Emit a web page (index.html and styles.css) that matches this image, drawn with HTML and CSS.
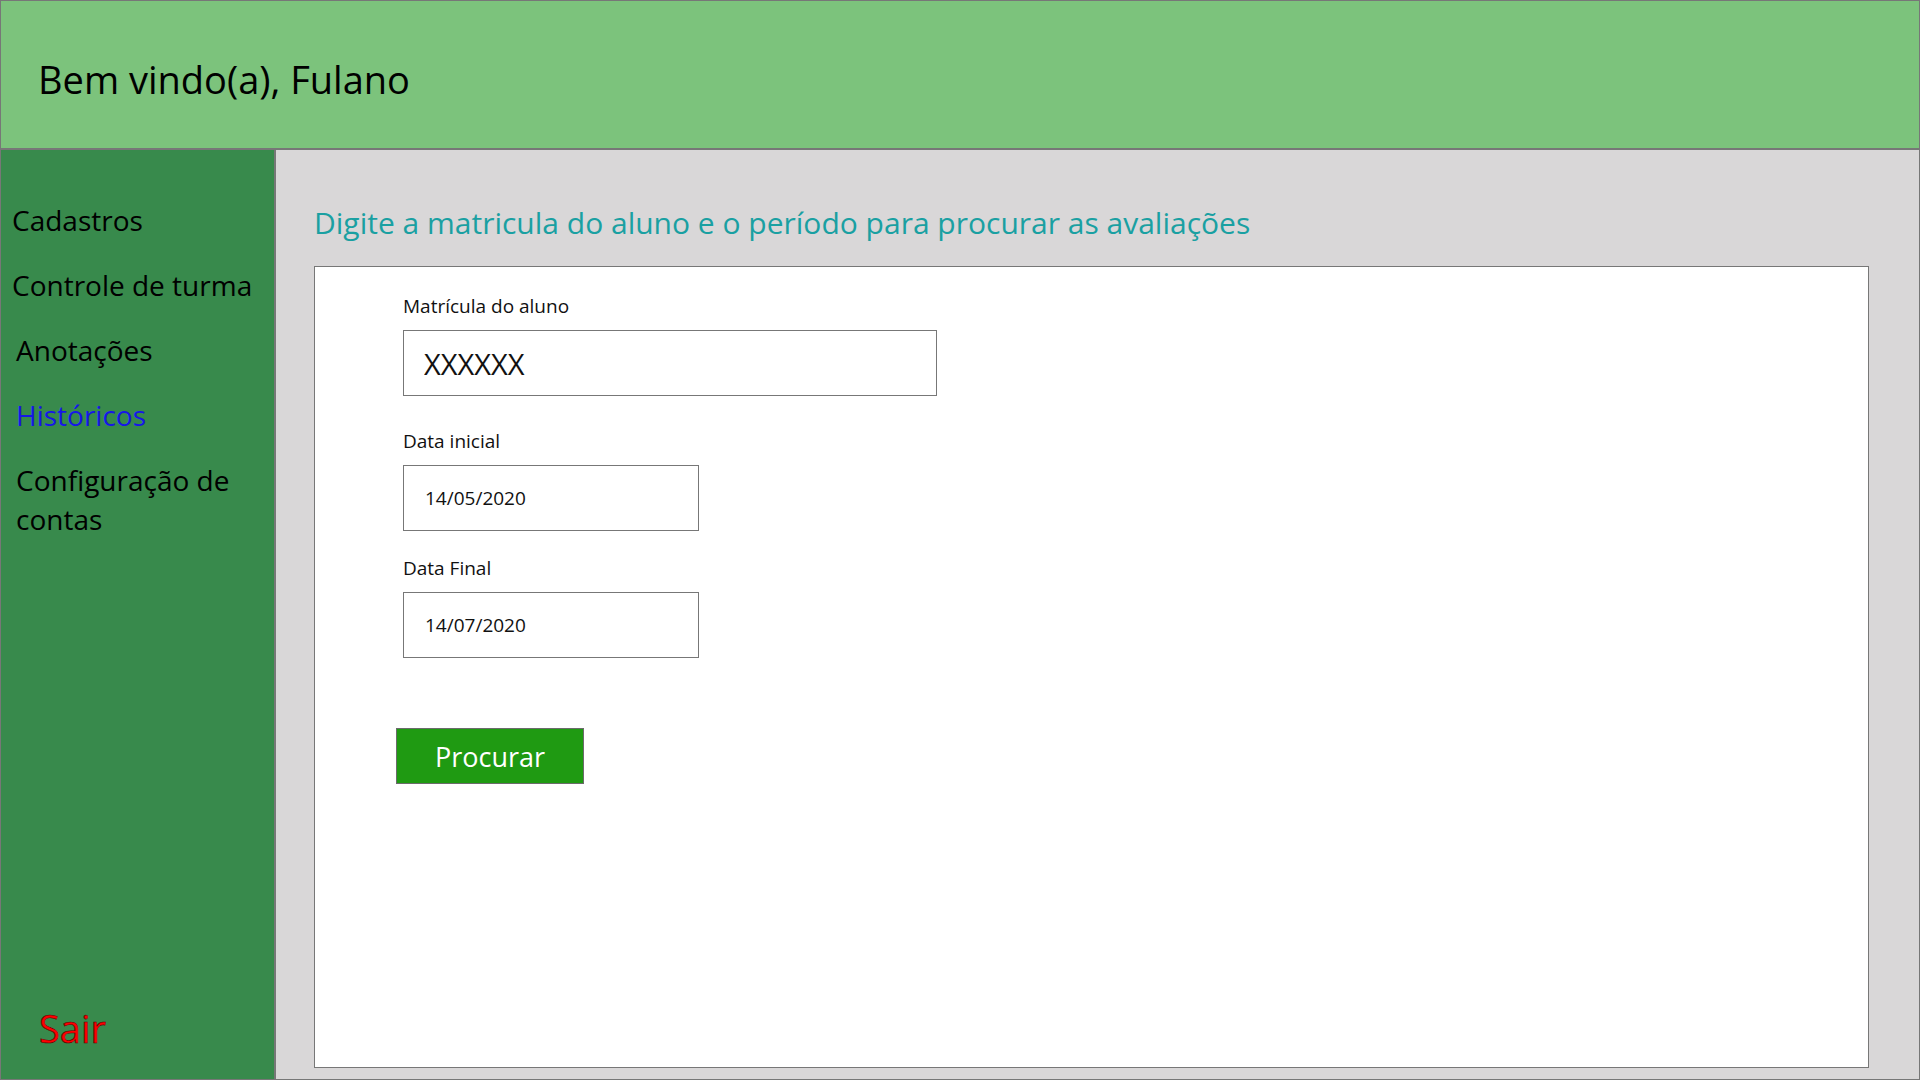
FILE: index.html
```html
<!DOCTYPE html>
<html lang="pt-BR">
<head>
<meta charset="utf-8">
<title>Históricos</title>
<link rel="stylesheet" href="styles.css">
</head>
<body>
<div class="app">
  <header class="topbar">
    <h1 class="welcome">Bem vindo(a), Fulano</h1>
  </header>
  <nav class="sidebar">
    <ul class="nav-list">
      <li class="nav-item">Cadastros</li>
      <li class="nav-item">Controle de turma</li>
      <li class="nav-item nav-item--indent">Anotações</li>
      <li class="nav-item nav-item--indent nav-item--active">Históricos</li>
      <li class="nav-item nav-item--indent">Configuração de contas</li>
    </ul>
    <div class="logout">Sair</div>
  </nav>
  <main class="content">
    <h2 class="page-title">Digite a matricula do aluno e o período para procurar as avaliações</h2>
    <section class="panel">
      <form class="search-form">
        <label class="field">
          <span class="field-label">Matrícula do aluno</span>
          <input class="field-input field-input--wide" type="text" value="XXXXXX">
        </label>
        <label class="field field--spaced">
          <span class="field-label">Data inicial</span>
          <input class="field-input field-input--date" type="text" value="14/05/2020">
        </label>
        <label class="field field--tight">
          <span class="field-label">Data Final</span>
          <input class="field-input field-input--date" type="text" value="14/07/2020">
        </label>
        <button class="search-btn" type="button">Procurar</button>
      </form>
    </section>
  </main>
</div>
</body>
</html>
```

FILE: styles.css
```css
* { box-sizing: border-box; }

html, body {
  margin: 0;
  padding: 0;
  width: 1920px;
  height: 1080px;
  overflow: hidden;
  font-family: "Open Sans", "Noto Sans", sans-serif;
}

.app {
  width: 1920px;
  height: 1080px;
  border: 1px solid #777777;
  display: grid;
  grid-template-columns: 275px 1fr;
  grid-template-rows: 149px 1fr;
}

.topbar {
  grid-column: 1 / 3;
  background: #7cc37c;
  border-bottom: 2px solid #777777;
  padding: 52px 0 0 37px;
}

.welcome {
  margin: 0;
  font-weight: 400;
  font-size: 38px;
  line-height: 52px;
  color: #000;
}

.sidebar {
  background: #388a4c;
  border-right: 2px solid #777777;
  display: flex;
  flex-direction: column;
  padding: 51px 14px 25px 0;
}

.nav-list {
  list-style: none;
  margin: 0;
  padding: 0;
  display: flex;
  flex-direction: column;
  gap: 26px;
}

.nav-item {
  font-size: 28px;
  line-height: 39px;
  color: #000;
  padding-left: 11px;
}

.nav-item--indent { padding-left: 15px; }

.nav-item--active { color: #1616e8; }

.logout {
  margin-top: auto;
  padding-left: 38px;
  font-size: 38px;
  line-height: 52px;
  color: #ff0000;
  -webkit-text-stroke: 0.6px #5a0000;
}

.content {
  background: #d9d7d8;
  padding: 52px 50px 11px 38px;
  display: flex;
  flex-direction: column;
}

.page-title {
  margin: 0 0 23px 0;
  font-weight: 400;
  font-size: 30px;
  line-height: 41px;
  color: #1aa0a2;
  white-space: nowrap;
}

.panel {
  flex: 1;
  background: #ffffff;
  border: 1px solid #777777;
  padding: 26px 0 0 81px;
}

.search-form {
  display: flex;
  flex-direction: column;
  align-items: flex-start;
  padding-left: 7px;
}

.field {
  display: flex;
  flex-direction: column;
  gap: 11px;
}

.field--spaced { margin-top: 32px; }
.field--tight { margin-top: 24px; }

.field-label {
  font-size: 19px;
  line-height: 26px;
  color: #111;
}

.field-input {
  height: 66px;
  border: 1px solid #777777;
  background: #fff;
  margin: 0;
  font-family: "Open Sans", "Noto Sans", sans-serif;
  color: #111;
  outline: none;
}

.field-input--wide {
  width: 534px;
  padding: 0 0 0 20px;
  font-size: 29px;
}

.field-input--date {
  width: 296px;
  padding: 0 0 0 21px;
  font-size: 19px;
}

.search-btn {
  margin: 70px 0 0 -7px;
  width: 188px;
  height: 56px;
  background: #1f9a12;
  border: 1px solid #6b6b6b;
  color: #ffffff;
  font-family: "Open Sans", "Noto Sans", sans-serif;
  font-size: 27px;
  line-height: 1;
  padding: 0;
  cursor: pointer;
}
```
